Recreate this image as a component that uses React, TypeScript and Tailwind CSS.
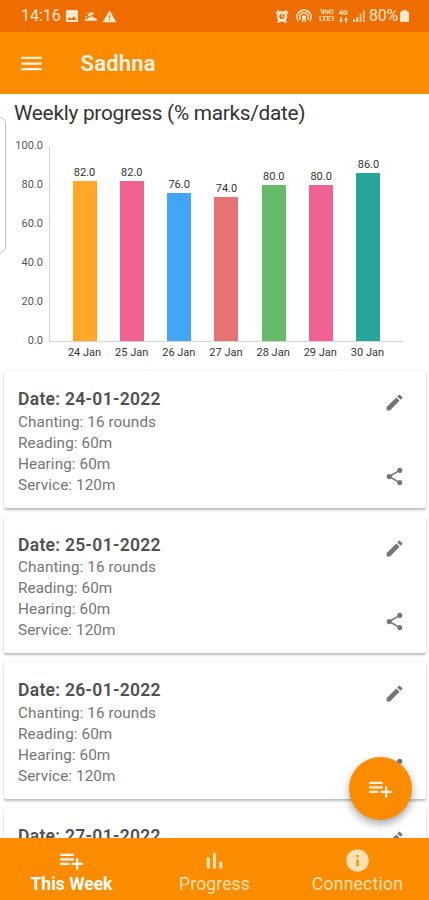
import { MdEdit, MdImage, MdInfo, MdMenu, MdShare, MdWarning } from "react-icons/md";

const bars = [
  { day: "24 Jan", value: 82, cls: "bg-[#ffa726]" },
  { day: "25 Jan", value: 82, cls: "bg-[#f06292]" },
  { day: "26 Jan", value: 76, cls: "bg-[#42a5f5]" },
  { day: "27 Jan", value: 74, cls: "bg-[#e57373]" },
  { day: "28 Jan", value: 80, cls: "bg-[#66bb6a]" },
  { day: "29 Jan", value: 80, cls: "bg-[#f06292]" },
  { day: "30 Jan", value: 86, cls: "bg-[#26a69a]" },
];

const ticks = ["100.0", "80.0", "60.0", "40.0", "20.0", "0.0"];

const routine = ["Chanting: 16 rounds", "Reading: 60m", "Hearing: 60m", "Service: 120m"];

const entries = [
  { date: "24-01-2022", lines: routine },
  { date: "25-01-2022", lines: routine },
  { date: "26-01-2022", lines: routine },
  { date: "27-01-2022", lines: [] },
];

function PlaylistAdd({ className }: { className?: string }) {
  return (
    <svg viewBox="0 0 24 24" fill="currentColor" className={className}>
      <path d="M14 10H2v2h12v-2zm0-4H2v2h12V6zm4 8v-4h-2v4h-4v2h4v4h2v-4h4v-2h-4zM2 16h8v-2H2v2z" />
    </svg>
  );
}

function BarsIcon({ className }: { className?: string }) {
  return (
    <svg viewBox="0 0 24 24" fill="currentColor" className={className}>
      <path d="M5 9.2h3V19H5zM10.6 5h2.8v14h-2.8zM16.2 13H19v6h-2.8z" />
    </svg>
  );
}

function StatusBar() {
  return (
    <div className="flex h-8 shrink-0 items-center bg-[#ef6c00] pl-[21px] pr-5 text-[#ffe9cf]">
      <span className="w-[41px] text-base leading-none">14:16</span>
      <MdImage className="ml-[2px] size-4" />
      {/* weather */}
      <svg viewBox="0 0 14 12" fill="currentColor" className="ml-[4px] h-3 w-[14px]">
        <path d="M4 5.500a3.300 3.300 0 0 1 6-1.800L8.500 5 6.500 5.600 5.500 6.600zM.8 6.600l2.300-.6.3.9-2.300.5zM2.300 2.600l1.900.8-.6.9zM.8 10.800c0-2 1.800-2.500 3.200-2C5 6 9 5.700 10.200 8c1.800-.4 3 .9 3 2.800z" />
      </svg>
      <MdWarning className="ml-[4px] size-[15px]" />

      <div className="ml-auto flex items-center">
        {/* alarm */}
        <svg viewBox="0 0 14 14" className="size-[14px]" fill="currentColor">
          <path d="M.4 3.800 3.400.8l1.400 1.400-3.200 3zM13.600 3.800 10.600.8 9.200 2.200l3.200 3zM2 13.400l1.800-3 2 1.600-1.200 1.400zM12 13.400l-1.800-3-2 1.600 1.200 1.400z" />
          <circle cx="7" cy="7.400" r="4" fill="none" stroke="currentColor" strokeWidth="2.600" />
          <path d="M6.500 4.800h1v2.400l1.700 1-.5.8-2.200-1.300z" />
        </svg>
        {/* hotspot */}
        <svg viewBox="0 0 16 14" className="ml-[7px] h-[14px] w-4" fill="none" stroke="currentColor" strokeWidth="1.500">
          <path d="M2.400 12.200A7 7 0 1 1 13.600 12.200M4.900 10.800A4.200 4.200 0 1 1 11.100 10.800" />
          <circle cx="8" cy="8.200" r="1.300" fill="currentColor" />
          <path d="M6.300 13 8 9l1.700 4" />
        </svg>
        <div className="ml-[7px] flex w-4 flex-col items-center text-[7px] font-bold leading-[7px]">
          <span>VoO</span>
          <span className="whitespace-nowrap">LTE1</span>
        </div>
        <div className="ml-[4px] flex w-[9px] flex-col items-center text-[7px] font-bold leading-[7px]">
          <span>4G</span>
          <svg viewBox="0 0 9 6" fill="currentColor" className="h-[6px] w-[9px]">
            <path d="M2 6 0 3.200h1.300V0h1.400v3.200H4zM7 0l2 2.800H7.700V6H6.300V2.800H5z" />
          </svg>
        </div>
        <svg viewBox="0 0 12 12" fill="currentColor" className="ml-[5px] size-3">
          <path d="M0 9.500h2V12H0zM3.300 7h2v5h-2z" />
          <path d="M6.600 3.500h2V12h-2zM9.900 0h2v12h-2z" opacity=".65" />
        </svg>
        <span className="ml-[4px] w-[31px] text-base leading-none tracking-[-0.3px]">80%</span>
        <svg viewBox="0 0 9 12" fill="currentColor" className="h-3 w-[9px]">
          <path d="M2.500 0h4v1.500H8q1 0 1 1V11q0 1-1 1H1q-1 0-1-1V2.500q0-1 1-1h1.500z" />
        </svg>
      </div>
    </div>
  );
}

function WeeklyChart() {
  return (
    <div className="flex pt-5">
      {/* y axis labels */}
      <div className="-mt-[6px] flex h-[207px] w-[43px] flex-col justify-between text-right text-[11px] leading-3 text-[#555]">
        {ticks.map(t => <span key={t}>{t}</span>)}
      </div>

      <div className="ml-[5.500px] w-[355px]">
        <div className="flex h-[196px] items-end justify-between border-b border-l border-[#d4d4d4] px-[23px]">
          {bars.map(b => (
            <div key={b.day} className="flex w-6 flex-col items-center">
              <span className="mb-[2px] text-[11px] leading-3 text-[#333]">{b.value.toFixed(1)}</span>
              <div className={`w-full ${b.cls}`} style={{ height: b.value * 1.95 }} />
            </div>
          ))}
        </div>
        <div className="mt-[5px] flex justify-between px-[24px] text-[11px] leading-3 text-[#333]">
          {bars.map(b => (
            <span key={b.day} className="flex w-6 justify-center whitespace-nowrap">{b.day}</span>
          ))}
        </div>
      </div>
    </div>
  );
}

function DayCard({ date, lines }: { date: string; lines: string[] }) {
  return (
    <div className="flex h-[136.500px] shrink-0 justify-between rounded-[2px] bg-white pl-[14px] pr-[21px] shadow-[0_1.500px_2.500px_rgba(0,0,0,0.27)]">
      <div className="pt-[17px] text-[15.300px] leading-[21.100px] tracking-[0.08px] text-[#757575]">
        <p className="mb-[0.700px] text-[17.500px] font-semibold leading-[23px] tracking-[0.3px] text-[#505050]">Date: {date}</p>
        {lines.map(l => <p key={l}>{l}</p>)}
      </div>
      <div className="flex flex-col justify-between pb-[21px] pt-[21px] text-[#757575]">
        <MdEdit className="size-[21px]" />
        <MdShare className="size-[21px]" />
      </div>
    </div>
  );
}

export default function App() {
  return (
    <div className="relative flex h-[900px] w-[429px] flex-col overflow-hidden bg-white font-['Roboto',sans-serif]">
      <StatusBar />

      <header className="flex h-[62px] shrink-0 items-center bg-[#fb8c00] pl-[18px] text-[#fff4e3]">
        <MdMenu className="size-[27px]" />
        <h1 className="ml-[35.500px] text-[22px] font-semibold tracking-[0.2px]">Sadhna</h1>
      </header>

      <main className="min-h-0 flex-1 overflow-hidden">
        <h2 className="pl-[14px] pt-[6px] text-[20.800px] leading-[26px] tracking-[-0.27px] text-[#333]">Weekly progress (% marks/date)</h2>
        <WeeklyChart />

        <div className="mt-[12px] flex flex-col gap-[9px] pl-1 pr-[3px]">
          {entries.map(e => <DayCard key={e.date} date={e.date} lines={e.lines} />)}
        </div>
      </main>

      <nav className="grid h-[62px] shrink-0 grid-cols-3 bg-[#fb8c00] pt-[8.500px] text-[17.500px] leading-[20px] text-[#ffe0b2]">
        <div className="flex flex-col items-center font-bold text-white">
          <PlaylistAdd className="size-[27px]" />
          <span>This Week</span>
        </div>
        <div className="flex flex-col items-center">
          <BarsIcon className="size-[27px]" />
          <span className="tracking-[0.15px]">Progress</span>
        </div>
        <div className="flex flex-col items-center">
          <MdInfo className="size-[27px]" />
          <span className="tracking-[0.25px]">Connection</span>
        </div>
      </nav>

      {/* edge panel handle */}
      <div className="absolute -left-2 top-[117px] h-[136px] w-[14px] rounded-[6px] border-[1.500px] border-[#c4c4c4] bg-white" />

      <button className="absolute left-[348.500px] top-[757px] flex size-[63px] items-center justify-center rounded-full bg-[#fb8c00] text-[#fff4e3] shadow-[0_4px_8px_rgba(0,0,0,0.35)]">
        <PlaylistAdd className="size-[27px]" />
      </button>
    </div>
  );
}
